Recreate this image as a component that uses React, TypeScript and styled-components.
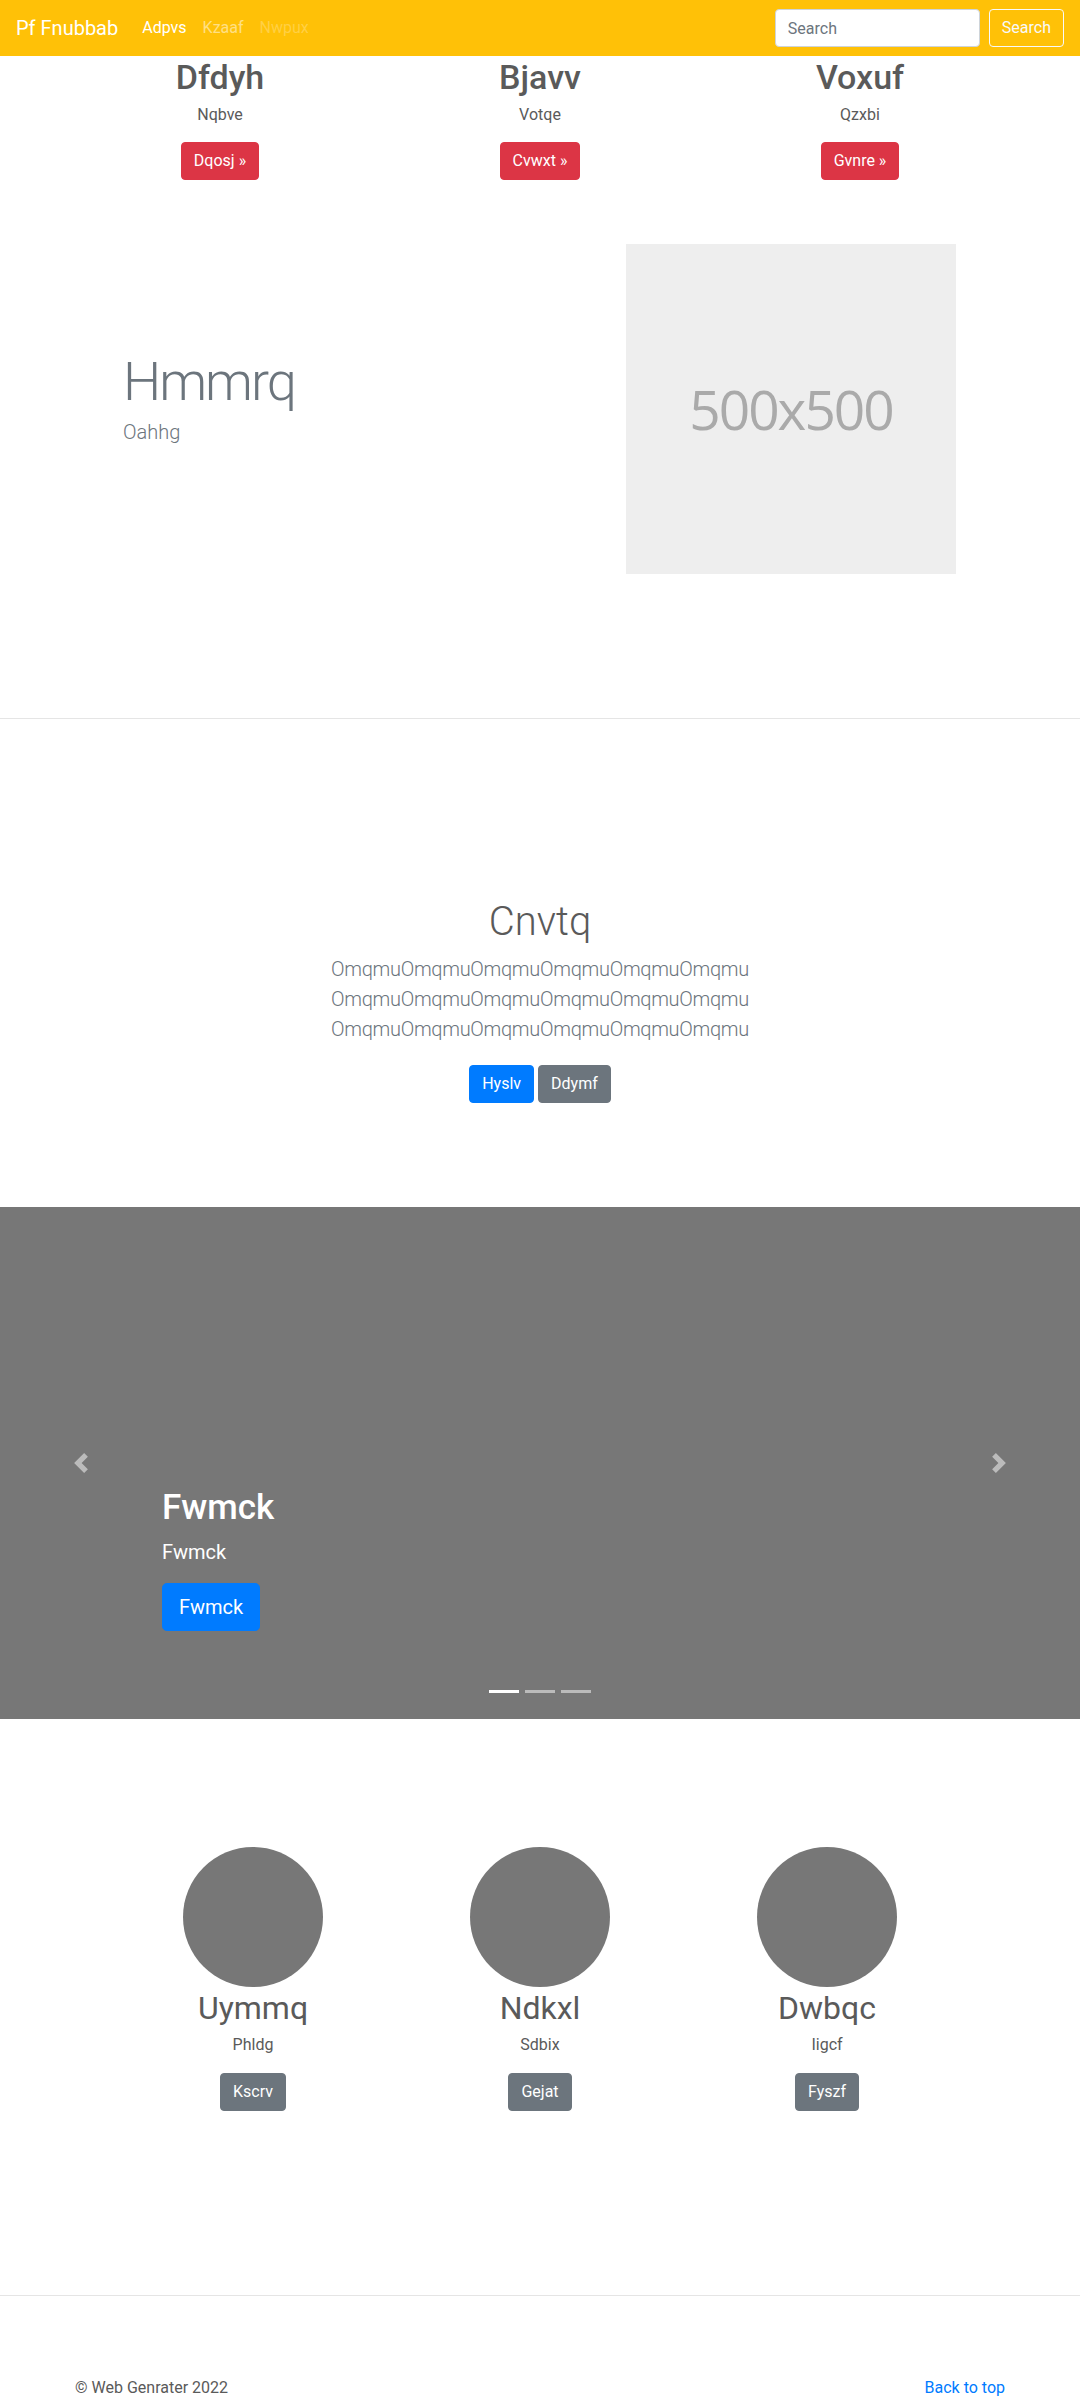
import React from "react";
import styled, { createGlobalStyle } from "styled-components";

const Global = createGlobalStyle`
  * { box-sizing: border-box; }
  body {
    margin: 0;
    font-family: Roboto, "Open Sans", Arial, sans-serif;
    font-size: 16px;
    line-height: 1.5;
    color: #5a5a5a;
    background: #fff;
  }
  h1, h2, p { margin: 0; }
`;

const Navbar = styled.nav`
  height: 56px;
  background: #ffc107;
  padding: 8px 16px;
  display: flex;
  align-items: center;
`;

const Brand = styled.a`
  font-size: 20px;
  line-height: 30px;
  padding: 5px 0;
  margin-right: 16px;
  color: #fff;
  text-decoration: none;
  white-space: nowrap;
`;

const NavList = styled.ul`
  display: flex;
  list-style: none;
  margin: 0;
  padding: 0;
  flex: 1;
`;

const NavLink = styled.a<{ $state: "active" | "normal" | "disabled" }>`
  display: block;
  padding: 8px;
  line-height: 24px;
  text-decoration: none;
  color: ${(p) =>
    p.$state === "active"
      ? "#fff"
      : p.$state === "normal"
      ? "rgba(255,255,255,.5)"
      : "rgba(255,255,255,.25)"};
`;

const SearchForm = styled.form`
  display: flex;
  align-items: center;
  gap: 9px;
`;

const SearchInput = styled.input`
  width: 205px;
  height: 38px;
  padding: 6px 12px;
  font: inherit;
  font-size: 16px;
  color: #495057;
  background: #fff;
  border: 1px solid #ced4da;
  border-radius: 4px;
  &::placeholder { color: #6c757d; }
`;

const Btn = styled.a<{ $variant: "danger" | "primary" | "secondary" | "outline"; $size?: "lg" }>`
  display: inline-block;
  font-size: ${(p) => (p.$size === "lg" ? "20px" : "16px")};
  line-height: ${(p) => (p.$size === "lg" ? "30px" : "24px")};
  padding: ${(p) => (p.$size === "lg" ? "8px 16px" : "6px 12px")};
  border-radius: ${(p) => (p.$size === "lg" ? "4.8px" : "4px")};
  border: 1px solid
    ${(p) =>
      p.$variant === "danger"
        ? "#dc3545"
        : p.$variant === "primary"
        ? "#007bff"
        : p.$variant === "secondary"
        ? "#6c757d"
        : "#f8f9fa"};
  background: ${(p) =>
    p.$variant === "danger"
      ? "#dc3545"
      : p.$variant === "primary"
      ? "#007bff"
      : p.$variant === "secondary"
      ? "#6c757d"
      : "transparent"};
  color: ${(p) => (p.$variant === "outline" ? "#f8f9fa" : "#fff")};
  text-decoration: none;
  white-space: nowrap;
  cursor: pointer;
`;

const Features = styled.section`
  width: 960px;
  margin: 0 auto;
  padding-top: 1px;
  display: grid;
  grid-template-columns: repeat(3, 1fr);
`;

const FeatureCol = styled.div`
  text-align: center;
`;

const FeatureTitle = styled.h2`
  font-size: 34px;
  line-height: 1.2;
  font-weight: 500;
  margin-bottom: 5px;
  color: #5a5a5a;
`;

const FeatureText = styled.p`
  margin-bottom: 15px;
`;

const Featurette = styled.section`
  width: 930px;
  margin: 0 auto;
  padding: 64px 49px 144px 48px;
  display: flex;
  align-items: center;
  justify-content: space-between;
`;

const FeaturetteText = styled.div``;

const FeaturetteHeading = styled.h2`
  font-size: 54px;
  line-height: 1;
  font-weight: 300;
  letter-spacing: -2px;
  color: #6c757d;
  margin-bottom: 8px;
`;

const Lead = styled.p`
  font-size: 20px;
  line-height: 30px;
  font-weight: 300;
  color: #6c757d;
  margin-bottom: 16px;
`;

const Placeholder = styled.div`
  width: 330px;
  height: 330px;
  background: #eee;
  color: #aaa;
  display: flex;
  align-items: center;
  justify-content: center;
  font-family: "Open Sans", Roboto, sans-serif;
  font-size: 55px;
  letter-spacing: -2px;
`;

const Divider = styled.hr`
  margin: 0;
  border: 0;
  border-top: 1px solid rgba(0, 0, 0, 0.1);
`;

const Hero = styled.section`
  padding: 179px 0 104px;
  text-align: center;
`;

const HeroTitle = styled.h1`
  font-size: 40px;
  line-height: 48px;
  font-weight: 300;
  color: #5a5a5a;
  margin-bottom: 8px;
`;

const HeroLine = styled.span`
  display: block;
  letter-spacing: -0.3px;
`;

const ButtonRow = styled.div`
  display: flex;
  justify-content: center;
  gap: 4px;
  margin-top: 21px;
`;

const Carousel = styled.section`
  position: relative;
  height: 512px;
  background: #777;
  overflow: hidden;
`;

const Caption = styled.div`
  position: absolute;
  left: 15%;
  right: 15%;
  bottom: 52px;
  padding: 20px 0;
  color: #fff;
  text-align: left;
`;

const CaptionTitle = styled.h1`
  font-size: 35px;
  line-height: 42px;
  font-weight: 500;
  margin-bottom: 8px;
`;

const CaptionText = styled.p`
  font-size: 20px;
  line-height: 30px;
  margin-bottom: 16px;
`;

const CaptionAction = styled.div`
  display: flex;
  margin-bottom: 16px;
`;

const Control = styled.a<{ $side: "left" | "right" }>`
  position: absolute;
  top: 0;
  bottom: 0;
  ${(p) => (p.$side === "left" ? "left: 0;" : "right: 0;")}
  width: 15%;
  display: flex;
  align-items: center;
  justify-content: center;
  opacity: 0.5;
`;

const Indicators = styled.ol`
  position: absolute;
  left: 0;
  right: 0;
  bottom: 0;
  margin: 0 0 16px;
  padding: 0;
  list-style: none;
  display: flex;
  justify-content: center;
`;

const Indicator = styled.li<{ $active?: boolean }>`
  width: 30px;
  height: 23px;
  margin: 0 3px;
  border-top: 10px solid transparent;
  border-bottom: 10px solid transparent;
  background: #fff;
  background-clip: padding-box;
  opacity: ${(p) => (p.$active ? 1 : 0.5)};
`;

const Team = styled.section`
  padding: 128px 0 184px;
  display: grid;
  grid-template-columns: repeat(3, 287px);
  justify-content: center;
`;

const Member = styled.div`
  display: flex;
  flex-direction: column;
  align-items: center;
  text-align: center;
`;

const Avatar = styled.div`
  width: 140px;
  height: 140px;
  border-radius: 50%;
  background: #777;
`;

const MemberName = styled.h2`
  font-size: 32px;
  line-height: 38.4px;
  font-weight: 400;
  margin: 2px 0 6px;
  color: #5a5a5a;
`;

const MemberRole = styled.p`
  margin-bottom: 16px;
`;

const Footer = styled.footer`
  width: 930px;
  margin: 0 auto;
  padding-top: 80px;
  display: flex;
  justify-content: space-between;
  line-height: 24px;
`;

const TopLink = styled.a`
  color: #007bff;
  text-decoration: none;
`;

const Chevron = ({ dir }: { dir: "left" | "right" }) => (
  <svg width="20" height="20" viewBox="0 0 8 8" fill="#fff">
    <path
      d={
        dir === "left"
          ? "M5.25 0l-4 4 4 4 1.5-1.5L4.25 4l2.5-2.5L5.25 0z"
          : "M2.75 0l-1.5 1.5L3.75 4l-2.5 2.5L2.75 8l4-4-4-4z"
      }
    />
  </svg>
);

const features = [
  { title: "Dfdyh", text: "Nqbve", btn: "Dqosj »" },
  { title: "Bjavv", text: "Votqe", btn: "Cvwxt »" },
  { title: "Voxuf", text: "Qzxbi", btn: "Gvnre »" },
];

const members = [
  { name: "Uymmq", role: "Phldg", btn: "Kscrv" },
  { name: "Ndkxl", role: "Sdbix", btn: "Gejat" },
  { name: "Dwbqc", role: "Iigcf", btn: "Fyszf" },
];

const line = "Omqmu".repeat(6);

export default function App() {
  return (
    <>
      <Global />
      <Navbar>
        <Brand href="#">Pf Fnubbab</Brand>
        <NavList>
          <li><NavLink $state="active" href="#">Adpvs</NavLink></li>
          <li><NavLink $state="normal" href="#">Kzaaf</NavLink></li>
          <li><NavLink $state="disabled" href="#">Nwpux</NavLink></li>
        </NavList>
        <SearchForm onSubmit={(e) => e.preventDefault()}>
          <SearchInput placeholder="Search" />
          <Btn $variant="outline">Search</Btn>
        </SearchForm>
      </Navbar>

      <Features>
        {features.map((f) => (
          <FeatureCol key={f.title}>
            <FeatureTitle>{f.title}</FeatureTitle>
            <FeatureText>{f.text}</FeatureText>
            <Btn $variant="danger">{f.btn}</Btn>
          </FeatureCol>
        ))}
      </Features>

      <Featurette>
        <FeaturetteText>
          <FeaturetteHeading>Hmmrq</FeaturetteHeading>
          <Lead>Oahhg</Lead>
        </FeaturetteText>
        <Placeholder>500x500</Placeholder>
      </Featurette>

      <Divider />

      <Hero>
        <HeroTitle>Cnvtq</HeroTitle>
        <Lead>
          <HeroLine>{line}</HeroLine>
          <HeroLine>{line}</HeroLine>
          <HeroLine>{line}</HeroLine>
        </Lead>
        <ButtonRow>
          <Btn $variant="primary">Hyslv</Btn>
          <Btn $variant="secondary">Ddymf</Btn>
        </ButtonRow>
      </Hero>

      <Carousel>
        <Indicators>
          <Indicator $active />
          <Indicator />
          <Indicator />
        </Indicators>
        <Caption>
          <CaptionTitle>Fwmck</CaptionTitle>
          <CaptionText>Fwmck</CaptionText>
          <CaptionAction>
            <Btn $variant="primary" $size="lg">Fwmck</Btn>
          </CaptionAction>
        </Caption>
        <Control $side="left" href="#"><Chevron dir="left" /></Control>
        <Control $side="right" href="#"><Chevron dir="right" /></Control>
      </Carousel>

      <Team>
        {members.map((m) => (
          <Member key={m.name}>
            <Avatar />
            <MemberName>{m.name}</MemberName>
            <MemberRole>{m.role}</MemberRole>
            <Btn $variant="secondary">{m.btn}</Btn>
          </Member>
        ))}
      </Team>

      <Divider />

      <Footer>
        <span>© Web Genrater 2022</span>
        <TopLink href="#">Back to top</TopLink>
      </Footer>
    </>
  );
}
